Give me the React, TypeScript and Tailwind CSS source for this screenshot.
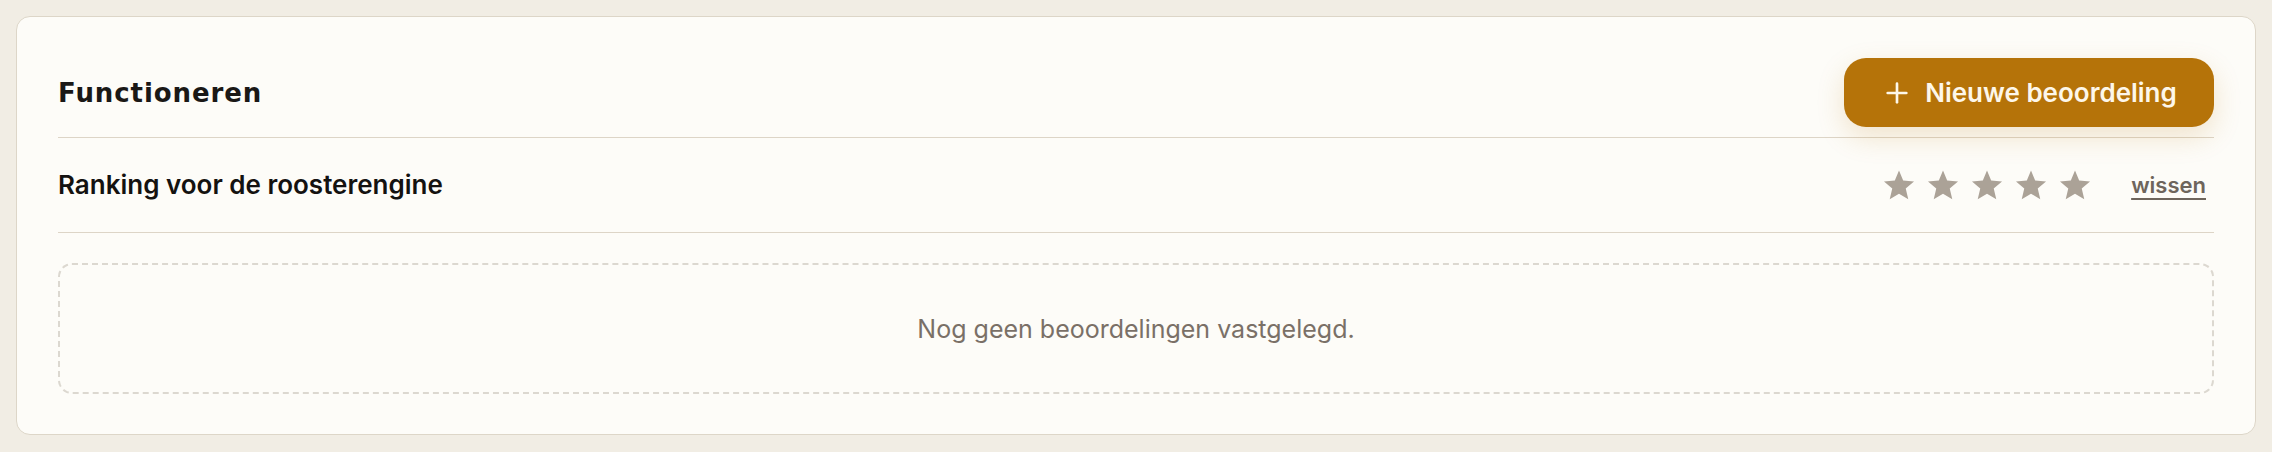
import { Plus } from "lucide-react";

const sans = "font-['Inter','Noto_Sans',sans-serif]";

function Star() {
  return (
    <svg viewBox="0 0 24 24" className="h-[34px] w-[34px]" fill="#aba297">
      <path d="M12 1.8l2.95 7.1 7.65.6-5.85 5 1.8 7.5L12 18.1 5.45 22l1.8-7.5-5.85-5 7.65-.6z" />
    </svg>
  );
}

export default function App() {
  return (
    <div className={`min-h-[452px] bg-[#f1ede4] p-4 ${sans}`}>
      <div className="rounded-[14px] border border-[#ddd6c8] bg-[#fdfcf8] px-[41px] pb-[40px] pt-[41px]">
        {/* Header */}
        <div className="flex items-center justify-between border-b border-[#ddd5c7] pb-[10px]">
          <h2 className="font-['DejaVu_Sans',sans-serif] text-[26px] font-bold leading-[34px] tracking-[0.035em] text-[#1a1816]">
            Functioneren
          </h2>
          <button className="flex h-[69px] w-[370px] items-center justify-center gap-[12px] rounded-[22px] bg-[#b57309] text-[26px] font-semibold leading-[34px] text-[#fdf7ea] shadow-[0_10px_28px_rgba(181,115,9,0.18)]">
            <Plus className="h-[32px] w-[32px]" strokeWidth={2} />
            Nieuwe beoordeling
          </button>
        </div>

        {/* Criterion row */}
        <div className="flex items-center justify-between border-b border-[#ddd5c7] py-[30px]">
          <span className="text-[26px] font-semibold leading-[34px] text-[#141210]">
            Ranking voor de roosterengine
          </span>
          <div className="flex items-center">
            <div className="flex items-center gap-[10px]">
              <Star />
              <Star />
              <Star />
              <Star />
              <Star />
            </div>
            <button className="ml-[39px] mr-[8px] text-[22px] font-semibold leading-[30px] text-[#6e655c] underline decoration-2 underline-offset-[5px]">
              wissen
            </button>
          </div>
        </div>

        {/* Empty state */}
        <div className="mt-[30px] flex h-[131px] items-center justify-center rounded-[14px] border-2 border-dashed border-[#dcd8d0]">
          <p className="text-[25px] leading-[34px] text-[#7a7067]">
            Nog geen beoordelingen vastgelegd.
          </p>
        </div>
      </div>
    </div>
  );
}
